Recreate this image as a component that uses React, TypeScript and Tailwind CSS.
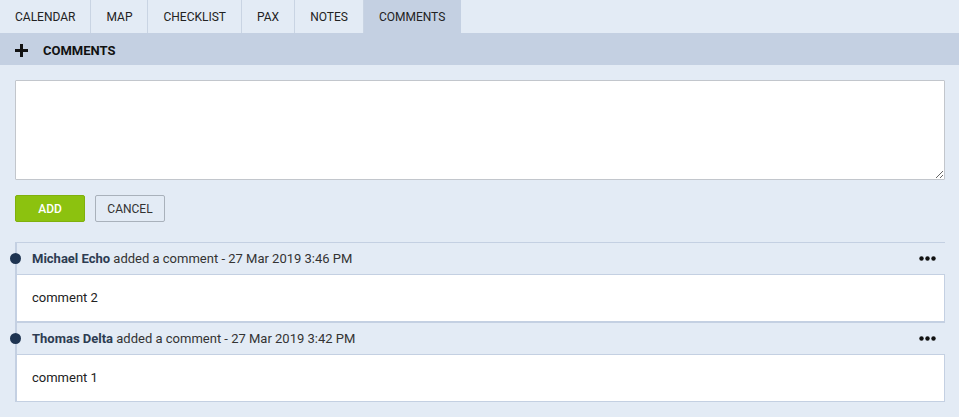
import React from "react";

const tabs = ["CALENDAR", "MAP", "CHECKLIST", "PAX", "NOTES", "COMMENTS"];

const comments = [
  { name: "Michael Echo", date: "27 Mar 2019 3:46 PM", text: "comment 2" },
  { name: "Thomas Delta", date: "27 Mar 2019 3:42 PM", text: "comment 1" },
];

const PlusIcon = () => (
  <svg width="13" height="13" viewBox="0 0 13 13" className="block">
    <rect x="5" y="0" width="3" height="13" fill="#111" />
    <rect x="0" y="5" width="13" height="3" fill="#111" />
  </svg>
);

const Dots = () => (
  <svg width="17" height="5" viewBox="0 0 17 5" className="block">
    <circle cx="2.5" cy="2.5" r="2.2" fill="#111" />
    <circle cx="8.5" cy="2.5" r="2.2" fill="#111" />
    <circle cx="14.5" cy="2.5" r="2.2" fill="#111" />
  </svg>
);

export default function App() {
  return (
    <div
      className="w-[959px] h-[417px] bg-[#e3ebf5] text-[12px] text-[#222]"
      style={{ fontFamily: "Roboto, 'Liberation Sans', sans-serif" }}
    >
      {/* tabs */}
      <div className="flex h-[33px]">
        {tabs.map((t) => (
          <div
            key={t}
            className={
              "flex items-center px-[15px] border-r " +
              (t === "COMMENTS" ? "bg-[#c4d0e2] border-[#c4d0e2]" : "border-[#c9d4e3]")
            }
          >
            {t}
          </div>
        ))}
      </div>

      {/* section header */}
      <div className="flex items-center h-[32px] bg-[#c4d0e2] px-[15px] pt-[3px]">
        <PlusIcon />
        <span className="ml-[15px] font-bold text-[13px] text-[#111]">COMMENTS</span>
      </div>

      <div className="pl-[15px] pr-[14px]">
        <textarea className="block mt-[15px] w-full h-[100px] bg-white border border-[#c2c6cc] rounded-[1px] resize-y outline-none" />

        <div className="flex gap-[10px] mt-[15px]">
          <button className="w-[70px] h-[27px] bg-[#8cc20f] border border-[#80b00c] rounded-[2px] text-white font-medium">
            ADD
          </button>
          <button className="w-[70px] h-[27px] border border-[#a9b1bb] rounded-[2px] text-[#333]">
            CANCEL
          </button>
        </div>

        <div className="mt-[20px] border-l-2 border-[#c4d0e2] text-[13px]">
          {comments.map((c) => (
            <div key={c.name}>
              <div className="relative flex items-center justify-between h-[32px] border-t border-[#c4d0e2] pl-[15px] pr-[9px]">
                <span className="absolute left-[-7px] top-[10px] w-[11px] h-[11px] rounded-full bg-[#1e3451]" />
                <span className="text-[#333]">
                  <span className="font-bold text-[#2d3c52]">{c.name}</span> added a comment - {c.date}
                </span>
                <Dots />
              </div>
              <div className="h-[48px] bg-white border border-l-0 border-[#c4d0e2] flex items-center pl-[15px]">
                {c.text}
              </div>
            </div>
          ))}
        </div>
      </div>
    </div>
  );
}
